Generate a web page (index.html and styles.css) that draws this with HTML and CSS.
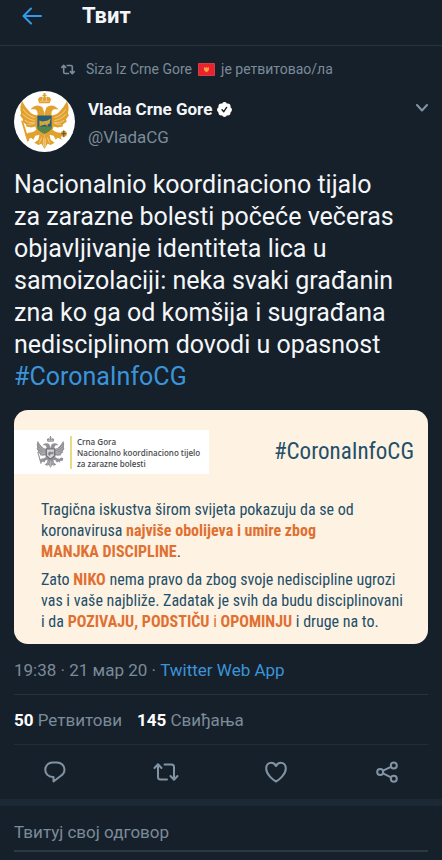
FILE: index.html
```html
<!DOCTYPE html>
<html lang="sr">
<head>
<meta charset="utf-8">
<meta name="viewport" content="width=device-width, initial-scale=1">
<title>Твит</title>
<link rel="stylesheet" href="styles.css">
</head>
<body>
<svg class="defs" aria-hidden="true">
  <symbol id="retweet" viewBox="0 0 26 20">
    <path d="M1.5 6 5 2.2 8.500 6M5 2.500V15q0 2.500 2.500 2.500H14M11.500 2.500H18.500q2.500 0 2.500 2.500V17M17.500 14 21 17.800 24.500 14"/>
  </symbol>
  <symbol id="eagle-half" viewBox="0 0 60 60">
    <path fill="currentColor" d="M30 22L28 16Q24 13 20 15L16 18L21 18Q24 20 23 24Q18 24 15 20Q11 16 8 10Q5 16 7 22L6 24L9 28L8 30L12 33L12 35L17 36L21 35L22 38Q19 41 14 41L11 44L14 45L13 48L17 46L19 48L21 44L25 43L24 48L20 51L24 53L27 52L30 57Z"/>
    <path class="feather" d="M9 18q5 7 11 8M9 23q5 5 11 6M11 29q4 3 9 2M14 33l6-1M27 46l-2 5M29 47v7"/>
  </symbol>
  <symbol id="eagle" viewBox="0 0 60 60">
    <use href="#eagle-half" width="60" height="60"/>
    <g transform="matrix(-1 0 0 1 60 0)"><use href="#eagle-half" width="60" height="60"/></g>
    <path fill="currentColor" d="M25 12Q22 7 26 6Q28 5 29 7V5H28V4H29V2H31V4H32V5H31V7Q32 5 34 6Q38 7 35 12ZM7 29L9 30L15 49L13 50ZM46 42a3 3 0 1 0 6 0a3 3 0 1 0-6 0"/>
    <path class="feather" d="M26 10h8M28 7v3M32 7v3"/>
  </symbol>
</svg>

<header class="topbar">
  <button class="icon-button" type="button" aria-label="Назад">
    <svg class="back" viewBox="0 0 20 18"><path d="M19 9H2M9 1.500 1.500 9 9 16.500"/></svg>
  </button>
  <h1>Твит</h1>
</header>

<main>
  <article class="tweet">
    <p class="context">
      <svg class="retweet-small"><use href="#retweet"/></svg>
      <span>Siza Iz Crne Gore</span>
      <svg class="flag" viewBox="0 0 17 13"><rect width="17" height="13" rx="1" fill="#c8434a"/><rect x="1" y="1" width="15" height="11" fill="#ed202b"/><path d="M6 4l2 1 .5-1.500L9 5l2-1v3L8.500 9.500 6 7z" fill="#f0a545"/></svg>
      <span>је ретвитовао/ла</span>
    </p>

    <div class="author">
      <svg class="avatar" viewBox="0 0 60 60" role="img" aria-label="Vlada Crne Gore">
        <circle cx="30" cy="30" r="30" fill="#fff"/>
        <use href="#eagle" width="60" height="60"/>
        <path d="M23 24h14v12q0 3-7 6-7-3-7-6z" fill="#285f78"/>
        <path d="M23 35h14v1q0 3-7 6-7-3-7-6z" fill="#57854a"/>
        <path d="M25 29l3 1 5-1 3-2-1 5-2 1v2l-2-2-4 1-2 1v-3z" fill="#d9a536"/>
        <path d="M47 42h4M49 39v6" stroke="#46503c" stroke-width="1"/>
      </svg>
      <div class="names">
        <div class="name"><strong>Vlada Crne Gore</strong>
          <svg class="verified" viewBox="0 0 24 24"><path fill="#fff" d="M22.500 12.500c0-1.580-.875-2.950-2.148-3.600.154-.435.238-.905.238-1.400 0-2.210-1.710-3.998-3.818-3.998-.47 0-.92.084-1.336.250C14.818 2.415 13.510 1.500 12 1.500s-2.816.917-3.437 2.250c-.415-.165-.866-.250-1.336-.250-2.110 0-3.818 1.790-3.818 4 0 .494.083.964.237 1.400-1.272.650-2.147 2.018-2.147 3.600 0 1.495.782 2.798 1.942 3.486-.020.170-.032.340-.032.514 0 2.210 1.708 4 3.818 4 .470 0 .920-.086 1.335-.250.620 1.334 1.926 2.250 3.437 2.250 1.512 0 2.818-.916 3.437-2.250.415.163.865.248 1.336.248 2.110 0 3.818-1.790 3.818-4 0-.174-.012-.344-.033-.513 1.158-.687 1.943-1.990 1.943-3.484z"/><path d="M8.500 12.500l2.500 2.500 4-6" fill="none" stroke="#16202b" stroke-width="2"/></svg>
        </div>
        <span class="handle">@VladaCG</span>
      </div>
      <button class="icon-button more" type="button" aria-label="Више">
        <svg class="chevron" viewBox="0 0 12 8"><path d="M1 1l5 5.500L11 1"/></svg>
      </button>
    </div>

    <p class="message">Nacionalnio koordinaciono tijalo<br>za zarazne bolesti počeće večeras<br>objavljivanje identiteta lica u<br>samoizolaciji: neka svaki građanin<br>zna ko ga od komšija i sugrađana<br>nedisciplinom dovodi u opasnost<br><a href="#">#CoronaInfoCG</a></p>

    <section class="card">
      <div class="card-head">
        <div class="agency">
          <svg class="crest" viewBox="5 1 50 57"><use href="#eagle" width="60" height="60"/><path d="M23 24h14v12l-7 6-7-6z" fill="#d6d6d8" stroke="#77777b" stroke-width="2"/><path d="M25 32l4-4 3 2 3-2v6l-4-1-3 4z" fill="#88888c"/></svg>
          <p>Crna Gora<br>Nacionalno koordinaciono tijelo<br>za zarazne bolesti</p>
        </div>
        <span class="card-tag">#CoronaInfoCG</span>
      </div>
      <div class="card-body">
        <p>Tragična iskustva širom svijeta pokazuju da se od<br>koronavirusa <b>najviše obolijeva i umire zbog</b><br><b>MANJKA DISCIPLINE</b>.</p>
        <p>Zato <b>NIKO</b> nema pravo da zbog svoje nediscipline ugrozi<br>vas i vaše najbliže. Zadatak je svih da budu disciplinovani<br>i da <b>POZIVAJU, PODSTIČU</b> <span class="orange">i</span> <b>OPOMINJU</b> i druge na to.</p>
      </div>
    </section>

    <p class="meta">19:38 · 21 мар 20 · <a href="#">Twitter Web App</a></p>
    <p class="stats"><span><strong>50</strong> Ретвитови</span><span><strong>145</strong> Свиђања</span></p>

    <div class="actions">
      <button class="icon-button" type="button" aria-label="Одговори"><svg class="i22" viewBox="0 0 22 22"><path d="M8.500 1.500H13a7.500 7 0 0 1 7.500 7c0 3.500-2 5.500-4.500 7L9.500 20.500v-4.500H8.500a7.200 7.200 0 0 1 0-14.500z"/></svg></button>
      <button class="icon-button" type="button" aria-label="Ретвитуј"><svg class="retweet-large"><use href="#retweet"/></svg></button>
      <button class="icon-button" type="button" aria-label="Свиђа ми се"><svg class="i22" viewBox="0 0 22 22"><path d="M11 20.500C8 19 1.200 13.500 1.200 7.500 1.200 4 3.500 1.700 6.300 1.700c2.200 0 3.800 1.300 4.700 3.300.9-2 2.500-3.300 4.700-3.300 2.800 0 5.100 2.300 5.100 5.800 0 6-6.800 11.500-9.800 13z"/></svg></button>
      <button class="icon-button" type="button" aria-label="Подели"><svg class="i22" viewBox="0 0 22 22"><circle cx="4.200" cy="11" r="3"/><circle cx="17.800" cy="4.500" r="3"/><circle cx="17.800" cy="17.800" r="3"/><path d="M7 9.700l8-3.800M7 12.300l8 4"/></svg></button>
    </div>
  </article>

  <form class="reply">
    <input type="text" aria-label="Твитуј свој одговор" placeholder="Твитуј свој одговор">
  </form>
</main>
</body>
</html>
```
FILE: styles.css
```css
* {
  box-sizing: border-box;
}

body {
  margin: 0;
  background: #16202b;
  color: #f4f6f8;
  font-family: Roboto, "Noto Sans", sans-serif;
  font-size: 17px;
  line-height: 24px;
}

h1,
p {
  margin: 0;
}

a {
  color: #3b94d9;
  text-decoration: none;
}

svg {
  display: block;
  flex: none;
  fill: none;
  stroke-linecap: round;
  stroke-linejoin: round;
}

.defs {
  position: absolute;
  width: 0;
  height: 0;
}

.feather {
  stroke: #fff;
  stroke-width: 1;
  opacity: 0.4;
}

.icon-button {
  display: flex;
  padding: 0;
  border: 0;
  background: none;
  color: #8294a3;
}

.icon-button svg {
  stroke: currentColor;
}

.topbar {
  display: flex;
  align-items: center;
  gap: 40px;
  height: 46px;
  padding: 0 22px 14px;
  border-bottom: 1px solid #26323d;
}

.topbar h1 {
  font-size: 22px;
  font-weight: 700;
}

.topbar .back {
  width: 20px;
  height: 18px;
  stroke: #2f9bea;
  stroke-width: 2;
}

.tweet {
  padding: 11px 14px 0;
}

.context {
  display: flex;
  align-items: center;
  gap: 6px;
  padding-left: 47px;
  color: #7b8b99;
  font-size: 14px;
}

.retweet-small {
  width: 14px;
  height: 11px;
  margin-right: 5px;
  stroke: currentColor;
  stroke-width: 3;
}

.flag {
  width: 17px;
  height: 13px;
}

.author {
  display: flex;
  align-items: flex-start;
  gap: 13px;
  margin-top: 10px;
}

.avatar {
  width: 61px;
  height: 61px;
  color: #e2a02c;
}

.names {
  flex: 1;
  padding-top: 6px;
}

.name {
  display: flex;
  align-items: center;
  gap: 4px;
}

.name strong {
  font-size: 17px;
}

.verified {
  width: 17px;
  height: 17px;
}

.handle {
  display: block;
  margin-top: 4px;
  color: #7b8b99;
}

.more {
  padding-top: 13px;
}

.chevron {
  width: 12px;
  height: 8px;
  stroke-width: 2;
}

.message {
  margin-top: 17px;
  font-size: 25px;
  line-height: 32px;
}

.card {
  margin-top: 17px;
  padding: 20px 0 12px;
  border-radius: 14px;
  background: #fef2e3;
  color: #234f68;
}

.card-head {
  display: flex;
  align-items: center;
  justify-content: space-between;
  padding-right: 14px;
}

.agency {
  display: flex;
  align-items: center;
  gap: 5px;
  height: 44px;
  padding: 0 9px 0 22px;
  background: #fff;
}

.crest {
  width: 29px;
  height: 34px;
  color: #929296;
}

.agency p {
  padding-left: 5px;
  border-left: 2px solid #e5dc84;
  color: #4b4b4f;
  font-family: "Open Sans", "Noto Sans", sans-serif;
  font-size: 8px;
  font-weight: 600;
  line-height: 11px;
}

.card-tag {
  font-family: "Roboto Condensed", "Liberation Sans Narrow", Roboto, sans-serif;
  font-size: 23px;
}

.card-body {
  display: grid;
  gap: 7px;
  padding: 25px 0 0 27px;
  font-family: "Roboto Condensed", "Liberation Sans Narrow", Roboto, sans-serif;
  font-size: 16px;
  line-height: 21px;
  white-space: nowrap;
}

.card-body b,
.orange {
  color: #e07030;
}

.meta {
  padding: 14px 0 12px;
  border-bottom: 1px solid #26323d;
  color: #7b8b99;
}

.stats {
  display: flex;
  gap: 15px;
  padding: 13px 0 12px;
  border-bottom: 1px solid #222d38;
  color: #7b8b99;
}

.stats strong {
  color: #fff;
}

.actions {
  display: grid;
  grid-template-columns: repeat(4, 1fr);
  align-items: center;
  justify-items: center;
  height: 54px;
  margin: 0 -14px;
}

.actions svg {
  stroke-width: 2;
}

.i22 {
  width: 22px;
  height: 22px;
}

.retweet-large {
  width: 26px;
  height: 20px;
}

.reply {
  padding: 8px 14px;
  border-top: 7px solid #1c2833;
}

.reply input {
  display: block;
  width: 100%;
  height: 38px;
  padding: 0;
  border: 0;
  border-bottom: 2px solid #2c3843;
  border-radius: 0;
  outline: 0;
  background: none;
  color: #f4f6f8;
  font: inherit;
}

.reply input::placeholder {
  color: #7b8b99;
  opacity: 1;
}
```
